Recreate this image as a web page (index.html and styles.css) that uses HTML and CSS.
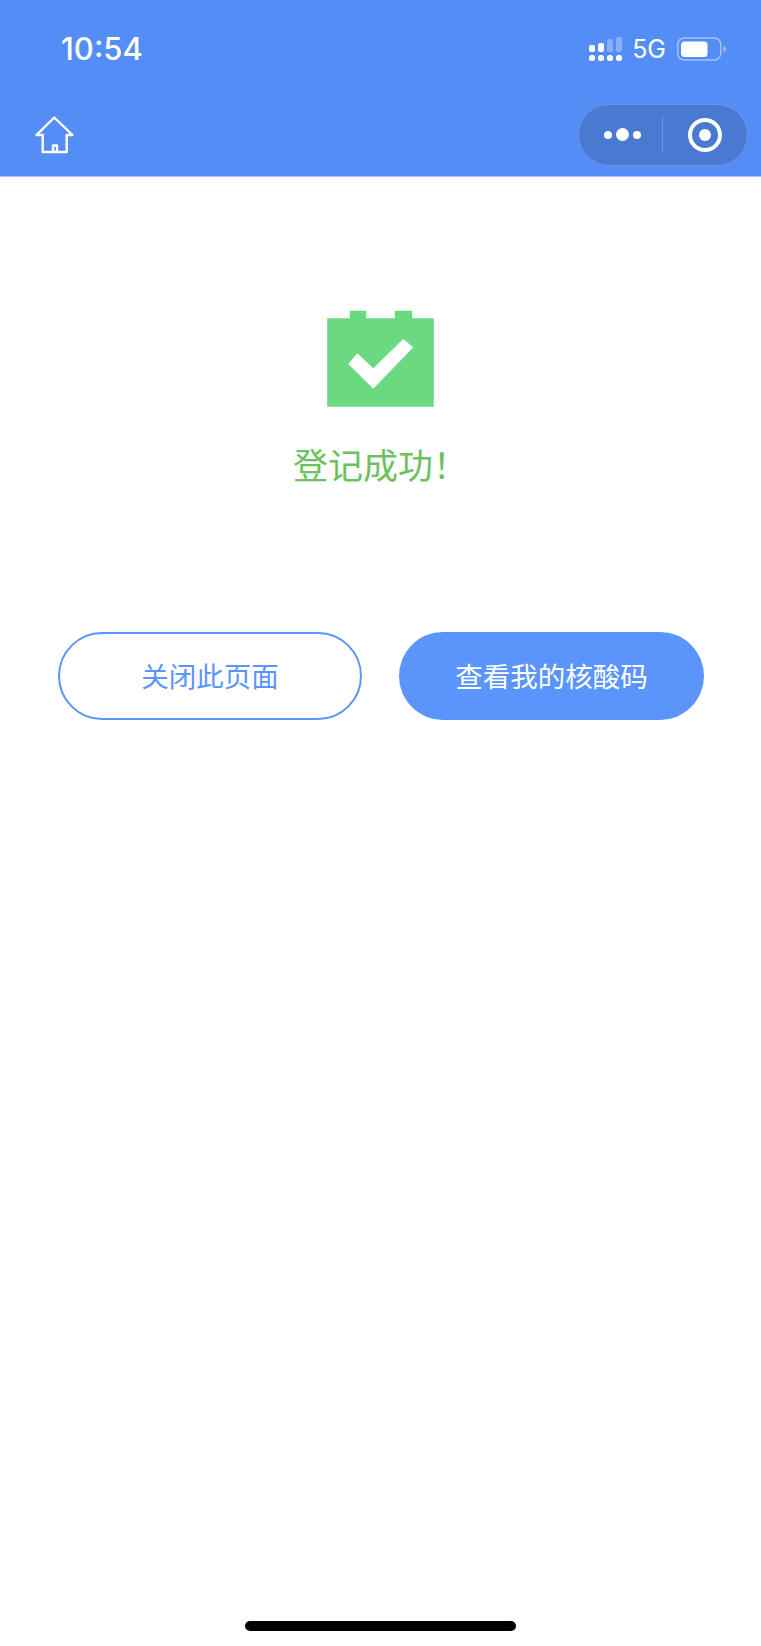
FILE: index.html
```html
<!DOCTYPE html>
<html lang="zh-CN">
  <head>
    <meta charset="UTF-8" />
    <meta name="viewport" content="width=device-width, initial-scale=1.0" />
    <title>登记成功</title>
    <link rel="stylesheet" href="styles.css">
  </head>
  <body>
    <div class="page">
      <header class="header">
        <div class="status">
          <span class="time">10:54</span>
          <div class="status-right">
            <svg class="signal" width="33" height="24" viewBox="0 0 33 24">
              <g fill="#fff">
                <rect x="0" y="8" width="6" height="7" rx="2" />
                <rect x="9" y="6" width="6" height="9" rx="2" />
                <rect x="0" y="18" width="6" height="6" rx="2.500" />
                <rect x="9" y="18" width="6" height="6" rx="2.500" />
                <rect x="18" y="18" width="6" height="6" rx="2.500" />
                <rect x="27" y="18" width="6" height="6" rx="2.500" />
              </g>
              <g fill="#fff" fill-opacity="0.3">
                <rect x="18" y="2" width="6" height="13" rx="2" />
                <rect x="27" y="0" width="6" height="15" rx="2" />
              </g>
            </svg>
            <span class="net">5G</span>
            <svg class="battery" width="50" height="26" viewBox="0 0 50 26">
              <rect x="0.750" y="2" width="43" height="22" rx="6.500" fill="none" stroke="#fff" stroke-opacity="0.45" stroke-width="1.500" />
              <rect x="4" y="5.500" width="26.500" height="15.500" rx="3.500" fill="#fff" />
              <path d="M46.500 10c1.500 .5 2.500 1.500 2.500 3s-1 2.500-2.500 3z" fill="#fff" fill-opacity="0.45" />
            </svg>
          </div>
        </div>
        <div class="nav">
          <svg class="home" width="40" height="40" viewBox="0 0 40 40" fill="none" stroke="#fff" stroke-width="2.400" stroke-linejoin="round">
            <path d="M20.300 2.500 2.500 20h6.200v17h24V20h5.800z" />
            <path d="M19 37v-6.500h4V37" />
          </svg>
          <div class="capsule">
            <div class="dots">
              <i class="dot"></i>
              <i class="dot big"></i>
              <i class="dot"></i>
            </div>
            <div class="divider"></div>
            <div class="target">
              <i class="target-inner"></i>
            </div>
          </div>
        </div>
      </header>

      <main class="content">
        <svg class="result-icon" width="108" height="97" viewBox="0 0 108 97">
          <path d="M.2 8.300h22.600V.7h16.400v7.600h28.600V.7h17.400v7.600h21.600v88.400H.2z" fill="#6bd97f" />
          <path d="M21.300 54l9-10.700 16 15 30-29.300 10 8.300-40 41.500z" fill="#fff" />
        </svg>
        <h1 class="result-title">登记成功！</h1>
        <div class="actions">
          <button class="btn btn-outline">关闭此页面</button>
          <button class="btn btn-primary">查看我的核酸码</button>
        </div>
      </main>

      <div class="home-bar"></div>
    </div>
  </body>
</html>
```

FILE: styles.css
```css
* {
  box-sizing: border-box;
}

body {
  margin: 0;
  background: #fff;
  font-family: "Noto Sans CJK SC", "Liberation Sans", sans-serif;
}

.page {
  display: flex;
  flex-direction: column;
  height: 1646px;
  overflow: hidden;
}

.header {
  height: 177px;
  background: #548df6;
  color: #fff;
  border-bottom: 1px solid #a9c6fa;
}

.status {
  display: flex;
  justify-content: space-between;
  align-items: center;
  height: 98px;
  padding: 0 34px 0 61px;
}

.time {
  font-family: Inter, "Liberation Sans", sans-serif;
  font-size: 31px;
  font-weight: 500;
  line-height: 36px;
}

.status-right {
  display: flex;
  align-items: center;
}

.signal {
  margin-right: 10px;
}

.net {
  font-family: Inter, "Liberation Sans", sans-serif;
  font-size: 25px;
  line-height: 30px;
  margin-right: 11px;
}

.nav {
  display: flex;
  justify-content: space-between;
  align-items: center;
  padding: 0 13px 0 34px;
  height: 78px;
}

.home {
  margin-top: -4px;
}

.capsule {
  display: flex;
  align-items: center;
  width: 170px;
  height: 62px;
  margin-top: -5px;
  border-radius: 31px;
  background: #4a79d1;
  border: 1px solid #6a95e6;
}

.dots {
  display: flex;
  align-items: center;
  justify-content: center;
  gap: 4px;
  flex: 0 0 83px;
  padding-left: 3px;
}

.dot {
  width: 8px;
  height: 8px;
  border-radius: 50%;
  background: #fff;
}

.dot.big {
  width: 13px;
  height: 13px;
}

.divider {
  width: 1px;
  height: 37px;
  background: #6a95e6;
}

.target {
  display: flex;
  align-items: center;
  justify-content: center;
  flex: 1;
}

.target-inner {
  display: flex;
  align-items: center;
  justify-content: center;
  width: 34px;
  height: 34px;
  border-radius: 50%;
  border: 4px solid #fff;
}

.target-inner::after {
  content: "";
  width: 12px;
  height: 12px;
  border-radius: 50%;
  background: #fff;
}

.content {
  display: flex;
  flex-direction: column;
  align-items: center;
  padding-top: 133px;
}

.result-icon {
  display: block;
  filter: blur(0.6px);
}

.result-title {
  margin: 32px 0 0;
  font-size: 35px;
  font-weight: 400;
  line-height: 50px;
  color: #6cc25d;
}

.actions {
  display: flex;
  gap: 37px;
  margin-top: 143px;
  width: 100%;
  padding-left: 58px;
}

.btn {
  width: 304px;
  height: 88px;
  padding: 0 0 2px;
  border-radius: 44px;
  font-family: inherit;
  font-size: 27.5px;
  font-weight: 400;
}

.btn-outline {
  background: #fff;
  color: #5b94fb;
  border: 2px solid #5b94fb;
}

.btn-primary {
  width: 305px;
  background: #5b94fb;
  color: #fff;
  border: none;
}

.home-bar {
  width: 271px;
  height: 10px;
  margin: auto auto 15px;
  border-radius: 5px;
  background: #000;
}
```
